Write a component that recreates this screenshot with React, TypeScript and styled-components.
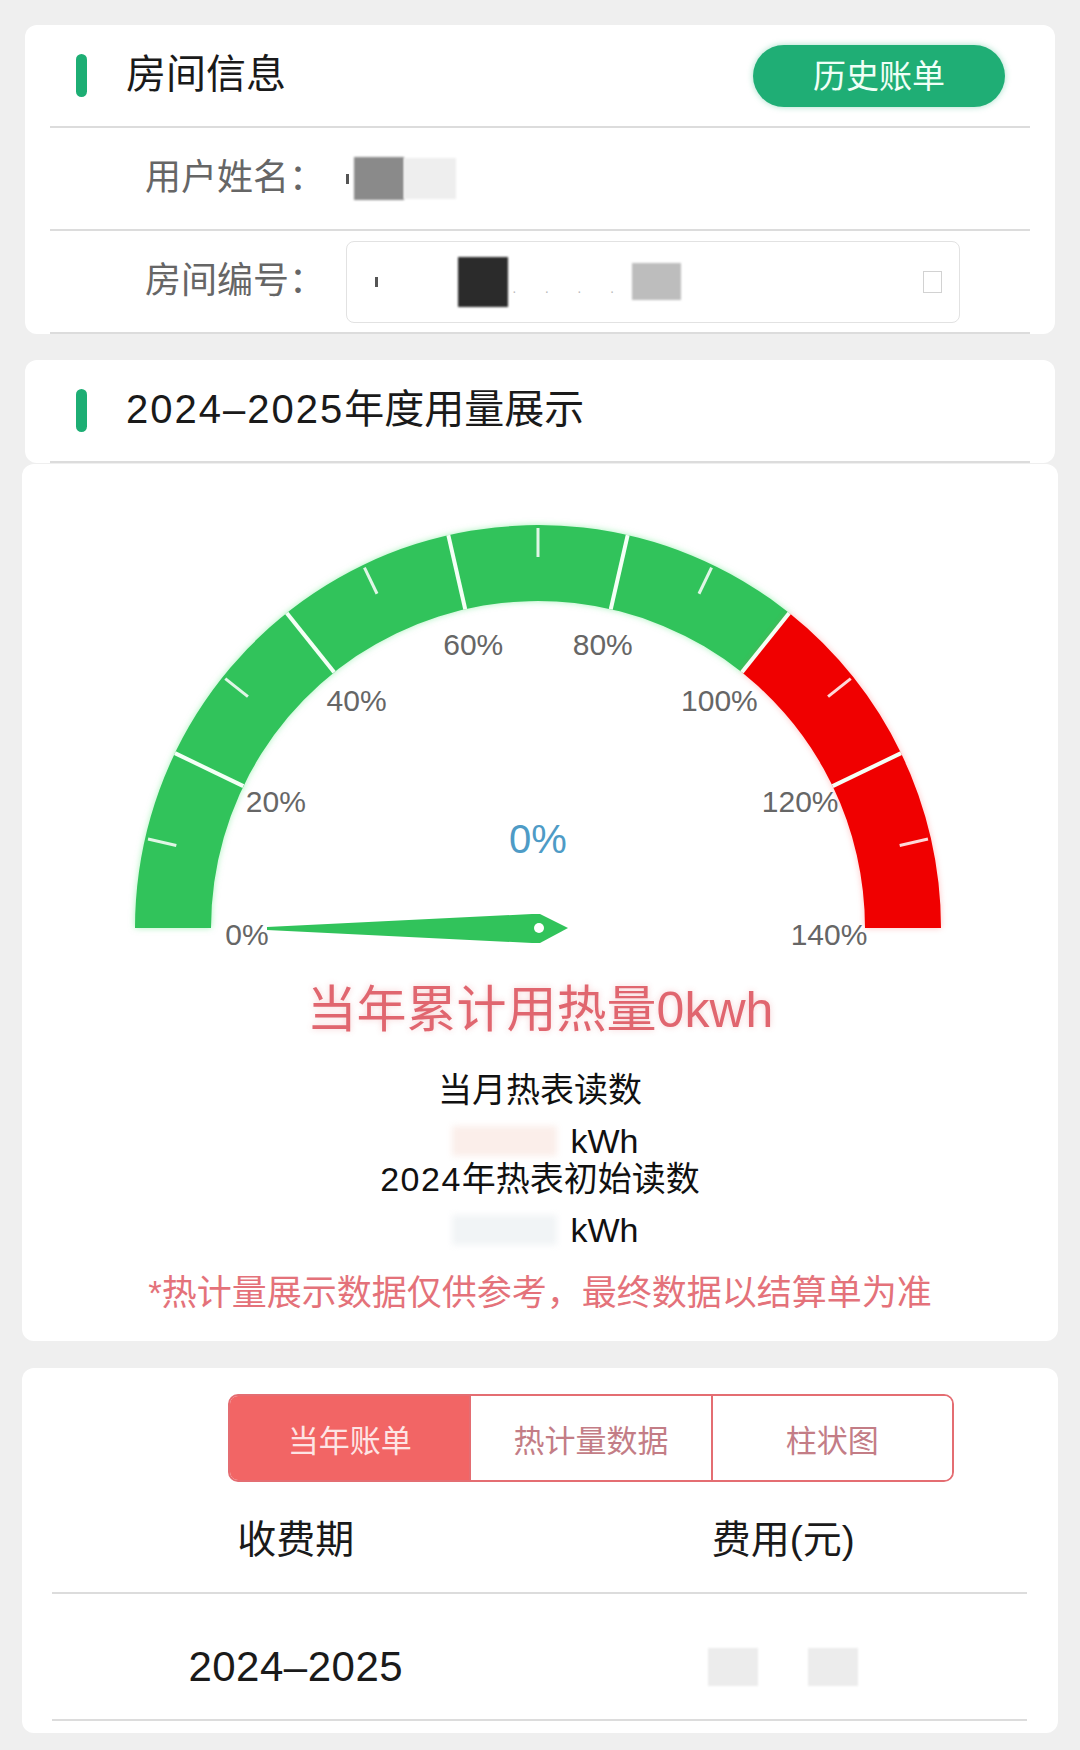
import React from "react";
import styled, { createGlobalStyle } from "styled-components";

const GlobalStyle = createGlobalStyle`
  html, body {
    margin: 0;
    padding: 0;
    background: #efefef;
  }
  body {
    font-family: "Liberation Sans", "Noto Sans CJK SC", sans-serif;
  }
`;

const Page = styled.div`
  width: 1080px;
  min-height: 1750px;
  padding-top: 25px;
  box-sizing: border-box;
  background: #efefef;
`;

const Card = styled.div<{ $inset: number; $gap: number }>`
  margin: 0 ${(p) => p.$inset}px ${(p) => p.$gap}px;
  background: #fff;
  border-radius: 12px;
`;

const InfoCard = styled(Card)`
  padding: 0 25px;
`;

const SectionHeader = styled.div`
  height: 103px;
  box-sizing: border-box;
  display: flex;
  align-items: center;
  padding: 0 25px 0 26px;
  border-bottom: 2px solid #dcdcdc;
`;

const GreenBar = styled.span`
  width: 11px;
  height: 43px;
  border-radius: 6px;
  background: #1dae74;
`;

const SectionTitle = styled.h2`
  margin: 0 0 10px 39px;
  font-size: 40px;
  font-weight: normal;
  color: #1a1a1a;
`;

const Digits = styled.span<{ $spacing: number }>`
  letter-spacing: ${(p) => p.$spacing}px;
`;

const HistoryButton = styled.button`
  margin-left: auto;
  width: 252px;
  height: 62px;
  border: none;
  border-radius: 31px;
  background: #1fae75;
  color: #effff6;
  font-family: inherit;
  font-size: 33px;
  padding-bottom: 4px;
  box-shadow: 0 0 6px rgba(31, 174, 117, 0.4);
`;

const InfoRow = styled.div`
  height: 103px;
  box-sizing: border-box;
  display: flex;
  align-items: center;
  padding-left: 95px;
  border-bottom: 2px solid #dcdcdc;
`;

const InfoLabel = styled.span`
  font-size: 36px;
  color: #666;
  margin: 0 21px 9px 0;
  white-space: nowrap;
`;

const Redacted = styled.span<{ $w: number; $h: number; $bg: string; $blur?: number }>`
  display: inline-block;
  width: ${(p) => p.$w}px;
  height: ${(p) => p.$h}px;
  background: ${(p) => p.$bg};
  filter: blur(${(p) => p.$blur ?? 1}px);
`;

const Sliver = styled.span`
  display: inline-block;
  width: 3px;
  height: 10px;
  background: #555;
  margin-right: 5px;
  align-self: center;
`;

const InputBox = styled.div`
  width: 614px;
  height: 82px;
  box-sizing: border-box;
  border: 1.5px solid #e2e2e2;
  border-radius: 8px;
  display: flex;
  align-items: center;
  padding: 0 17px 0 28px;
`;

const Dots = styled.span`
  font-size: 14px;
  color: #bbb;
  letter-spacing: 12px;
  margin: 18px 6px 0 4px;
`;

const CopyIcon = styled.span`
  margin-left: auto;
  width: 19px;
  height: 22px;
  box-sizing: border-box;
  border: 1.5px solid #d2d2d2;
`;

const GaugeSvg = styled.svg`
  display: block;
`;

const Band = styled.path<{ $glow: string }>`
  filter: drop-shadow(0 0 3px ${(p) => p.$glow});
`;

const TickLabel = styled.text`
  font-family: "Liberation Sans", sans-serif;
  font-size: 30px;
  fill: #666;
`;

const CenterValue = styled.text`
  font-family: "Liberation Sans", sans-serif;
  font-size: 40px;
  fill: #4e9bc6;
`;

const Summary = styled.div`
  margin-top: 16px;
  line-height: 60px;
  font-size: 50px;
  color: #e0666f;
  text-align: center;
  text-shadow: 0 0 6px rgba(226, 102, 110, 0.3);
`;

const Reading = styled.div<{ $gap: number }>`
  margin-top: ${(p) => p.$gap}px;
  text-align: center;
  font-size: 34px;
  line-height: 38px;
  color: #111;
`;

const ReadingValue = styled.div`
  margin-top: 13px;
  height: 38px;
  display: flex;
  align-items: center;
  justify-content: center;
  gap: 14px;
  font-size: 34px;
  color: #111;
  padding-left: 10px;
`;

const Disclaimer = styled.div`
  margin-top: 24px;
  padding-bottom: 28px;
  line-height: 40px;
  font-size: 35px;
  color: #e4727a;
  text-align: center;
`;

const BillCard = styled(Card)`
  padding: 26px 0 12px;
`;

const Tabs = styled.div`
  margin-left: 206px;
  width: 726px;
  height: 88px;
  box-sizing: border-box;
  display: flex;
  border: 2px solid #e46d72;
  border-radius: 10px;
  overflow: hidden;
`;

const Tab = styled.div<{ $active?: boolean }>`
  flex: 1;
  display: flex;
  align-items: center;
  justify-content: center;
  font-size: 31px;
  background: ${(p) => (p.$active ? "#f26565" : "#fff")};
  color: ${(p) => (p.$active ? "#fde4e4" : "#c37d86")};
  & + & {
    border-left: 2px solid #e46d72;
  }
`;

const Table = styled.div`
  margin: 0 31px 0 30px;
`;

const TableRow = styled.div<{ $head?: boolean }>`
  display: grid;
  grid-template-columns: 1fr 1fr;
  align-items: center;
  height: ${(p) => (p.$head ? 112 : 127)}px;
  box-sizing: border-box;
  padding: ${(p) => (p.$head ? "0 0 2px" : "21px 0 0")};
  border-bottom: 2px solid #dcdcdc;
  font-size: ${(p) => (p.$head ? 39 : 42)}px;
  color: #1a1a1a;
`;

const Cell = styled.div`
  display: flex;
  align-items: center;
  justify-content: center;
  gap: 6px;
`;

// gauge geometry (svg coords, card-relative)
const CX = 516;
const CY = 464;
const R_OUT = 403;
const R_IN = 327;
const MAX = 140;

const ang = (v: number) => Math.PI * (1 - v / MAX);
const pt = (v: number, r: number) => [CX + r * Math.cos(ang(v)), CY - r * Math.sin(ang(v))];

const band = (a: number, b: number) => {
  const [x1, y1] = pt(a, R_OUT);
  const [x2, y2] = pt(b, R_OUT);
  const [x3, y3] = pt(b, R_IN);
  const [x4, y4] = pt(a, R_IN);
  return `M${x1} ${y1} A${R_OUT} ${R_OUT} 0 0 1 ${x2} ${y2} L${x3} ${y3} A${R_IN} ${R_IN} 0 0 0 ${x4} ${y4} Z`;
};

const Gauge = () => {
  const major = [20, 40, 60, 80, 100, 120];
  const minor = [10, 30, 50, 70, 90, 110, 130];
  const labels = [0, 20, 40, 60, 80, 100, 120, 140];
  const needle = [
    [-271, -1],
    [-6, -14],
    [2, -14],
    [30, 0],
    [2, 15],
    [-6, 15],
    [-271, 2],
  ]
    .map(([x, y]) => `${CX + x},${CY + y}`)
    .join(" ");

  return (
    <GaugeSvg width="1036" height="500" viewBox="0 0 1036 500">
      <Band d={band(0, 100)} fill="#31c35b" $glow="rgba(80, 230, 120, 0.5)" />
      <Band d={band(100, 140)} fill="#f00000" $glow="rgba(255, 80, 80, 0.35)" />
      {major.map((v) => {
        const [x1, y1] = pt(v, R_IN);
        const [x2, y2] = pt(v, R_OUT);
        return <line key={v} x1={x1} y1={y1} x2={x2} y2={y2} stroke="#f4fff6" strokeWidth="4" />;
      })}
      {minor.map((v) => {
        const [x1, y1] = pt(v, R_OUT - 3);
        const [x2, y2] = pt(v, R_OUT - 32);
        return (
          <line key={v} x1={x1} y1={y1} x2={x2} y2={y2} stroke="rgba(255,255,255,0.85)" strokeWidth="3" />
        );
      })}
      {labels.map((v) => {
        const [x, y] = pt(v, 291);
        const dy = v === 0 || v === MAX ? 6 : 0;
        return (
          <TickLabel key={v} x={x} y={y + dy} textAnchor="middle" dominantBaseline="central">
            {v}%
          </TickLabel>
        );
      })}
      <CenterValue x={CX} y={375} textAnchor="middle" dominantBaseline="central">
        0%
      </CenterValue>
      <polygon points={needle} fill="#31c35b" />
      <circle cx={CX + 1} cy={CY} r="5" fill="#fff" />
    </GaugeSvg>
  );
};

const App = () => {
  return (
    <Page>
      <GlobalStyle />
      <InfoCard $inset={25} $gap={26}>
        <SectionHeader>
          <GreenBar />
          <SectionTitle>房间信息</SectionTitle>
          <HistoryButton>历史账单</HistoryButton>
        </SectionHeader>
        <InfoRow>
          <InfoLabel>用户姓名：</InfoLabel>
          <Sliver />
          <Redacted $w={50} $h={43} $bg="#8a8a8a" />
          <Redacted $w={52} $h={41} $bg="#eeeeee" />
        </InfoRow>
        <InfoRow>
          <InfoLabel>房间编号：</InfoLabel>
          <InputBox>
            <Sliver />
            <Redacted $w={75} $h={10} $bg="transparent" />
            <Redacted $w={50} $h={50} $bg="#2b2b2b" />
            <Dots>· · · ·</Dots>
            <Redacted $w={49} $h={37} $bg="#bdbdbd" />
            <CopyIcon />
          </InputBox>
        </InfoRow>
      </InfoCard>

      <InfoCard $inset={25} $gap={1}>
        <SectionHeader>
          <GreenBar />
          <SectionTitle>
            <Digits $spacing={2}>2024–2025</Digits>年度用量展示
          </SectionTitle>
        </SectionHeader>
      </InfoCard>

      <Card $inset={22} $gap={27}>
        <Gauge />
        <Summary>当年累计用热量0kwh</Summary>
        <Reading $gap={31}>当月热表读数</Reading>
        <ReadingValue>
          <Redacted $w={105} $h={30} $bg="#fbeeea" $blur={3} />
          kWh
        </ReadingValue>
        <Reading $gap={0}>
          <Digits $spacing={1.5}>2024</Digits>年热表初始读数
        </Reading>
        <ReadingValue>
          <Redacted $w={105} $h={30} $bg="#f1f4f6" $blur={3} />
          kWh
        </ReadingValue>
        <Disclaimer>*热计量展示数据仅供参考，最终数据以结算单为准</Disclaimer>
      </Card>

      <BillCard $inset={22} $gap={0}>
        <Tabs>
          <Tab $active>当年账单</Tab>
          <Tab>热计量数据</Tab>
          <Tab>柱状图</Tab>
        </Tabs>
        <Table>
          <TableRow $head>
            <Cell>收费期</Cell>
            <Cell>费用(元)</Cell>
          </TableRow>
          <TableRow>
            <Cell>
              <Digits $spacing={0.5}>2024–2025</Digits>
            </Cell>
            <Cell>
              <Redacted $w={50} $h={38} $bg="#ececec" />
              <Redacted $w={38} $h={10} $bg="transparent" />
              <Redacted $w={50} $h={38} $bg="#ececec" />
            </Cell>
          </TableRow>
        </Table>
      </BillCard>
    </Page>
  );
};

export default App;
